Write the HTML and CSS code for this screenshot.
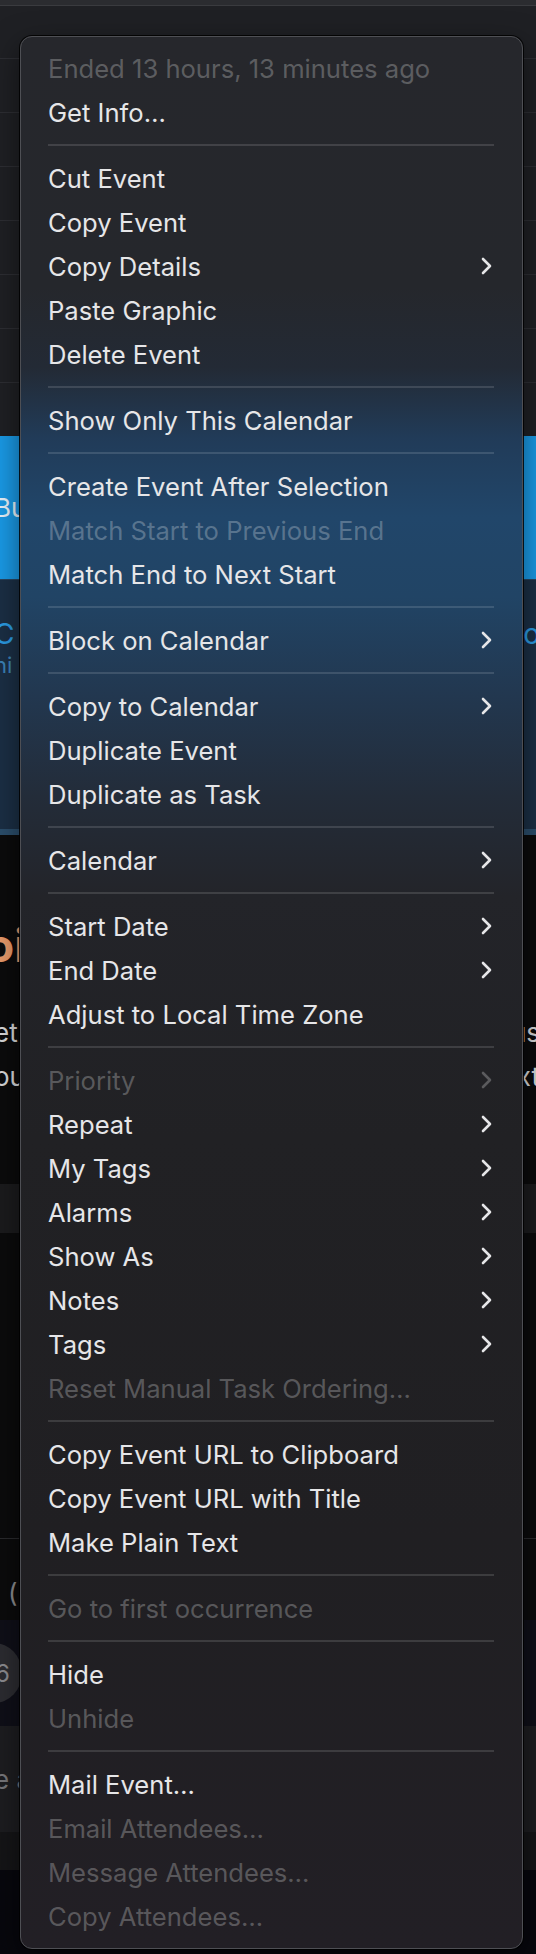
FILE: index.html
```html
<!DOCTYPE html>
<html lang="en">
<head>
<meta charset="utf-8">
<title>Event context menu</title>
<link rel="stylesheet" href="styles.css">
</head>
<body>
<div class="page">
  <div class="topbar"></div>
  <div class="grid">
    <div class="gridrow"></div><div class="gridrow"></div><div class="gridrow"></div><div class="gridrow"></div><div class="gridrow"></div><div class="gridrow"></div><div class="gridrow"></div>
  </div>
  <div class="event-bright"><span class="bg-left">Bu</span><span class="bg-right"></span></div>
  <div class="event-dim">
    <div class="line-a"><span class="bg-left">C</span><span class="bg-right">o</span></div>
    <div class="line-b"><span class="bg-left">ni</span><span class="bg-right"></span></div>
  </div>
  <div class="strip"></div>
  <div class="detail">
    <div class="title"><span class="bg-left title-left">oi</span><span class="bg-right"></span></div>
    <div class="body-line"><span class="bg-left">et</span><span class="bg-right">us</span></div>
    <div class="body-line"><span class="bg-left">ou</span><span class="bg-right">xt</span></div>
  </div>
  <div class="band-gray"></div>
  <div class="black-area"></div>
  <div class="paren-row"><span class="bg-left">(</span></div>
  <div class="avatar-row"><span class="avatar">6</span></div>
  <div class="input-row"><span class="bg-left">e a</span></div>
  <div class="dotted"></div>
  <div class="bottom"></div>
</div>

<div class="menu" role="menu">
  <div class="item disabled">Ended 13 hours, 13 minutes ago</div>
  <div class="item">Get Info…</div>
  <div class="sep"></div>
  <div class="item">Cut Event</div>
  <div class="item">Copy Event</div>
  <div class="item sub">Copy Details<svg class="chev" viewBox="0 0 11 18"><path d="M2 2 L9 9 L2 16"/></svg></div>
  <div class="item">Paste Graphic</div>
  <div class="item">Delete Event</div>
  <div class="sep"></div>
  <div class="item">Show Only This Calendar</div>
  <div class="sep"></div>
  <div class="item">Create Event After Selection</div>
  <div class="item disabled">Match Start to Previous End</div>
  <div class="item">Match End to Next Start</div>
  <div class="sep"></div>
  <div class="item sub">Block on Calendar<svg class="chev" viewBox="0 0 11 18"><path d="M2 2 L9 9 L2 16"/></svg></div>
  <div class="sep"></div>
  <div class="item sub">Copy to Calendar<svg class="chev" viewBox="0 0 11 18"><path d="M2 2 L9 9 L2 16"/></svg></div>
  <div class="item">Duplicate Event</div>
  <div class="item">Duplicate as Task</div>
  <div class="sep"></div>
  <div class="item sub">Calendar<svg class="chev" viewBox="0 0 11 18"><path d="M2 2 L9 9 L2 16"/></svg></div>
  <div class="sep"></div>
  <div class="item sub">Start Date<svg class="chev" viewBox="0 0 11 18"><path d="M2 2 L9 9 L2 16"/></svg></div>
  <div class="item sub">End Date<svg class="chev" viewBox="0 0 11 18"><path d="M2 2 L9 9 L2 16"/></svg></div>
  <div class="item">Adjust to Local Time Zone</div>
  <div class="sep"></div>
  <div class="item sub disabled">Priority<svg class="chev" viewBox="0 0 11 18"><path d="M2 2 L9 9 L2 16"/></svg></div>
  <div class="item sub">Repeat<svg class="chev" viewBox="0 0 11 18"><path d="M2 2 L9 9 L2 16"/></svg></div>
  <div class="item sub">My Tags<svg class="chev" viewBox="0 0 11 18"><path d="M2 2 L9 9 L2 16"/></svg></div>
  <div class="item sub">Alarms<svg class="chev" viewBox="0 0 11 18"><path d="M2 2 L9 9 L2 16"/></svg></div>
  <div class="item sub">Show As<svg class="chev" viewBox="0 0 11 18"><path d="M2 2 L9 9 L2 16"/></svg></div>
  <div class="item sub">Notes<svg class="chev" viewBox="0 0 11 18"><path d="M2 2 L9 9 L2 16"/></svg></div>
  <div class="item sub">Tags<svg class="chev" viewBox="0 0 11 18"><path d="M2 2 L9 9 L2 16"/></svg></div>
  <div class="item disabled">Reset Manual Task Ordering…</div>
  <div class="sep"></div>
  <div class="item">Copy Event URL to Clipboard</div>
  <div class="item">Copy Event URL with Title</div>
  <div class="item">Make Plain Text</div>
  <div class="sep"></div>
  <div class="item disabled">Go to first occurrence</div>
  <div class="sep"></div>
  <div class="item">Hide</div>
  <div class="item disabled">Unhide</div>
  <div class="sep"></div>
  <div class="item">Mail Event…</div>
  <div class="item disabled">Email Attendees…</div>
  <div class="item disabled">Message Attendees…</div>
  <div class="item disabled">Copy Attendees…</div>
</div>
</body>
</html>
```

FILE: styles.css
```css
* { box-sizing: border-box; }

html, body {
  margin: 0;
  padding: 0;
}

body {
  width: 536px;
  height: 1954px;
  overflow: hidden;
  background: #07070c;
  font-family: Inter, "Liberation Sans", sans-serif;
  position: relative;
}

/* ---------- background app content ---------- */
.page {
  display: flex;
  flex-direction: column;
  width: 536px;
}

.bg-left, .bg-right {
  display: block;
  white-space: nowrap;
}
.bg-left { margin-left: -6px; }
.bg-right { margin-right: -4px; }
.title-left { margin-left: -14px; }

.topbar {
  height: 6px;
  background: #2b2c30;
  border-bottom: 1px solid #3a3b3f;
}

.grid {
  display: flex;
  flex-direction: column;
  background: #1f2024;
  padding-top: 52px;
}
.gridrow {
  height: 54px;
  border-top: 1px solid #2d2e33;
}

.event-bright {
  height: 143px;
  background: #1a9ae6;
  display: flex;
  justify-content: space-between;
  align-items: center;
  color: #e9f3fb;
  font-size: 26px;
}

.event-dim {
  height: 250px;
  background: #1b2f45;
  border-top: 1px solid #2a4660;
  display: flex;
  flex-direction: column;
  padding-top: 38px;
}
.line-a {
  display: flex;
  justify-content: space-between;
  color: #2b9be3;
  font-size: 28px;
  line-height: 32px;
}
.line-b {
  display: flex;
  justify-content: space-between;
  color: #3b83b8;
  font-size: 22px;
  line-height: 26px;
  padding-top: 2px;
}

.strip {
  height: 6px;
  background: #2b4e6c;
}

.detail {
  height: 349px;
  background: #0b0b0c;
  display: flex;
  flex-direction: column;
  padding-top: 84px;
}
.title {
  display: flex;
  justify-content: space-between;
  color: #e89a6a;
  font-size: 46px;
  font-weight: 700;
  line-height: 52px;
}
.body-line {
  display: flex;
  justify-content: space-between;
  color: #d8d8da;
  font-size: 26px;
  line-height: 44px;
}
.title + .body-line { margin-top: 40px; }

.band-gray {
  height: 49px;
  background: #1b1b1d;
}

.black-area {
  height: 305px;
  background: #0b0b0c;
}

.paren-row {
  height: 82px;
  background: #0b0b0c;
  border-top: 1px solid #2a2a2d;
  color: #8b8b8e;
  font-size: 26px;
  display: flex;
  align-items: center;
  padding-left: 14px;
  padding-top: 26px;
}

.avatar-row {
  height: 106px;
  background: #0f0f18;
  display: flex;
  align-items: center;
}
.avatar {
  width: 56px;
  height: 60px;
  margin-left: -34px;
  border-radius: 50%;
  background: #2c2c31;
  color: #8c8c90;
  font-size: 24px;
  display: flex;
  align-items: center;
  justify-content: flex-end;
  padding-right: 12px;
}

.input-row {
  height: 106px;
  background: #1d1d20;
  color: #77777b;
  font-size: 26px;
  display: flex;
  align-items: center;
}

.dotted {
  height: 38px;
  background: #151517;
}

.bottom {
  height: 90px;
  background: #07070d;
}

/* ---------- context menu ---------- */
.menu {
  position: absolute;
  left: 20px;
  top: 36px;
  width: 503px;
  padding: 9px 28px 10px 27px;
  border-radius: 12px;
  border: 1px solid #4e4f54;
  box-shadow: 0 0 0 1px rgba(0,0,0,0.85), 0 10px 30px rgba(0,0,0,0.5);
  background: linear-gradient(to bottom,
    #26272c 0px,
    #25272c 250px,
    #232a35 330px,
    #213b58 400px,
    #21466a 480px,
    #214465 560px,
    #22374f 660px,
    #232c39 760px,
    #232429 860px,
    #212124 1100px,
    #201f22 1500px,
    #221f25 1911px);
  display: flex;
  flex-direction: column;
}

.item {
  height: 44px;
  display: flex;
  align-items: center;
  justify-content: space-between;
  padding: 0 2px 0 0;
  color: #e6e6e8;
  font-size: 25.6px;
  white-space: nowrap;
}

.item.disabled {
  color: rgba(255,255,255,0.26);
}

.chev {
  width: 11px;
  height: 18px;
  fill: none;
  stroke: currentColor;
  stroke-width: 2.6;
  stroke-linecap: round;
  stroke-linejoin: round;
}

.sep {
  height: 22px;
  display: flex;
  align-items: center;
}
.sep::before {
  content: "";
  display: block;
  width: 100%;
  height: 2px;
  background: rgba(255,255,255,0.13);
}
```
